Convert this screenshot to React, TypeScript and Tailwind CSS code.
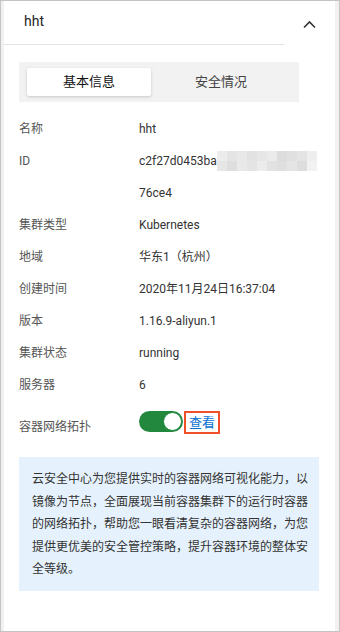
import React from "react";

const rows: { label: string; value: React.ReactNode }[] = [
  { label: "名称", value: "hht" },
  { label: "ID", value: "id" },
  { label: "", value: "76ce4" },
  { label: "集群类型", value: "Kubernetes" },
  { label: "地域", value: "华东1（杭州）" },
  { label: "创建时间", value: "2020年11月24日16:37:04" },
  { label: "版本", value: "1.16.9-aliyun.1" },
  { label: "集群状态", value: "running" },
  { label: "服务器", value: "6" },
];

// blurred cells for the hidden part of the id
const blur = [
  ["#ececec", "#e4e4e4", "#e8e8e8", "#e2e2e2", "#e6e6e6", "#ebebeb", "#dcdcdc", "#e0e0e0", "#e4e4e4", "#eeeeee"],
  ["#e6e6e6", "#dedede", "#e9e9e9", "#e4e4e4", "#ececec", "#e2e2e2", "#dfdfdf", "#e5e5e5", "#dddddd", "#f2f2f2"],
];

const font = { fontFamily: "Roboto, 'Noto Sans CJK SC', sans-serif" };

const App: React.FC = () => {
  return (
    <div
      className="w-[340px] h-[632px] border border-[#c4c4c4] bg-white flex overflow-hidden"
      style={font}
    >
      <div className="w-[3px] bg-[#f1f1f1]" />
      <div className="flex-1 flex flex-col">
        <div className="w-[280px] h-[44px] border-b border-[#e3e3e3] flex items-center pl-5 relative">
          <span className="text-[14px] text-[#222] -mt-[2px]">hht</span>
        </div>
        <div className="absolute left-[303px] top-[20px]">
          <svg width="13" height="9" viewBox="0 0 13 9" fill="none">
            <path d="M1 7.5 L6.5 2 L12 7.5" stroke="#333" strokeWidth="1.6" />
          </svg>
        </div>

        <div className="mt-[17px] ml-[15px] w-[280px] h-[40px] bg-[#f2f2f2] flex items-center px-2">
          <div className="w-[124px] h-[28px] bg-white rounded-[2px] shadow-[0_1px_3px_rgba(0,0,0,0.18)] flex items-center justify-center text-[13px] text-[#111]">
            基本信息
          </div>
          <div className="flex-1 flex items-center justify-center text-[13px] text-[#444]">
            安全情况
          </div>
        </div>

        <div className="mt-[11px] ml-[15px] flex flex-col">
          {rows.map((r, i) => (
            <div key={i} className="h-[32px] flex items-center text-[12px]">
              <div className="w-[120px] text-[#555]">{r.label}</div>
              {r.value === "id" ? (
                <div className="flex items-center">
                  <span className="text-[#333]">c2f27d0453ba</span>
                  <div className="flex flex-col">
                    {blur.map((line, j) => (
                      <div key={j} className="flex">
                        {line.map((c, k) => (
                          <div key={k} className="w-[10px] h-[10px]" style={{ background: c }} />
                        ))}
                      </div>
                    ))}
                  </div>
                </div>
              ) : (
                <div className="text-[#333]">{r.value}</div>
              )}
            </div>
          ))}
          <div className="h-[40px] flex items-start pt-[10px] text-[12px]">
            <div className="w-[120px] text-[#555] pt-[7px]">容器网络拓扑</div>
            <div className="w-[44px] h-[21px] rounded-full bg-[#22883e] flex items-center justify-end pr-[1px]">
              <div className="w-[19px] h-[19px] rounded-full bg-white border border-[#22883e]" />
            </div>
            <div className="ml-[1px] h-[23px] px-[3px] border-2 border-[#ef4f2b] flex items-center text-[13px] text-[#0a6fd0]">
              查看
            </div>
          </div>
        </div>

        <div className="mt-[16px] ml-[15px] w-[300px] bg-[#e5f1fc] pl-[13px] pr-[10px] pt-[11px] pb-[10px] text-[12px] leading-[22.5px] text-[#333]">
          云安全中心为您提供实时的容器网络可视化能力，以镜像为节点，全面展现当前容器集群下的运行时容器的网络拓扑，帮助您一眼看清复杂的容器网络，为您提供更优美的安全管控策略，提升容器环境的整体安全等级。
        </div>
      </div>
      <div className="w-[4px] bg-[#f1f1f1]" />
    </div>
  );
};

export default App;
